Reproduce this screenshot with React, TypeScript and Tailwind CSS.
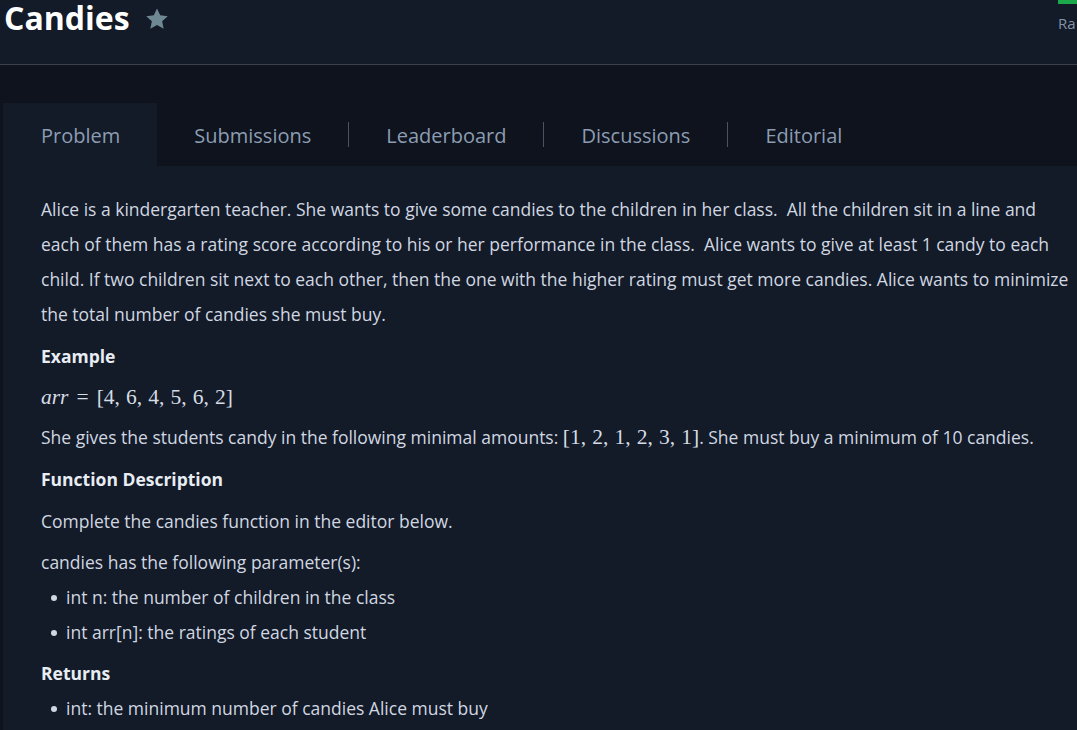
import type { FC } from 'react';

const tabs = ['Problem', 'Submissions', 'Leaderboard', 'Discussions', 'Editorial'];

const Math: FC<{ children: React.ReactNode }> = ({ children }) => (
  <span className="font-['Liberation_Serif','DejaVu_Serif',serif] text-[21.5px] text-[#d6dce4]">{children}</span>
);

const Header: FC = () => (
  <div className="relative h-[65px] border-b border-[#3b414c] bg-[#131a28]">
    <div className="flex items-center gap-[14px] pl-[4px] pt-[1px]">
      <h1 className="text-[32px] font-bold leading-[34px] text-white">Candies</h1>
      <svg viewBox="0 0 24 24" className="mt-[1px] h-[26px] w-[26px]" fill="#6f8994">
        <path d="M12 2.2l2.95 6.35 6.95.8-5.15 4.75 1.4 6.9L12 17.55 5.85 21l1.4-6.9L2.1 9.35l6.95-.8z" />
      </svg>
    </div>
    <div className="absolute right-0 top-0 w-[19px]">
      <div className="h-[4px] bg-[#1ba94c]" />
      <div className="mt-[11px] text-[15px] leading-[16px] text-[#8393a7]">Ra</div>
    </div>
  </div>
);

const Tabs: FC = () => (
  <div className="flex h-[63px] items-center bg-[#0e131d]">
    {tabs.map((tab, i) => (
      <div key={tab} className="flex h-full items-center">
        {i > 1 && <span className="h-[25px] w-px bg-[#4b5261]" />}
        <div
          className={
            'flex h-full items-center pt-[2px] text-[20px] text-[#8c9db3] ' +
            (i === 0 ? 'bg-[#131a28] pl-[38px] pr-[37px]' : 'px-[37px]')
          }
        >
          {tab}
        </div>
      </div>
    ))}
  </div>
);

const Bullet: FC<{ children: React.ReactNode }> = ({ children }) => (
  <li className="flex items-center leading-[35px]">
    <span className="mr-[9px] ml-[10px] h-[6px] w-[6px] rounded-full bg-[#d0d7e0]" />
    <span>{children}</span>
  </li>
);

const comma = ',\u2009\u200a';

export default function App() {
  return (
    <div className="h-[730px] w-full overflow-hidden bg-[#0e131d] font-['Open_Sans',sans-serif]">
      <Header />
      <div className="pl-[3px] pt-[38px]">
        <Tabs />
        <div className="whitespace-nowrap bg-[#131a28] px-[38px] pt-[26px] pb-10 text-[17.5px] text-[#d0d7e0]">
          <p className="mb-[7px] leading-[35px]">
            Alice is a kindergarten teacher. She wants to give some candies to the children in her class.{'\u00a0'} All
            the children sit in a line and
            <br />
            each of them has a rating score according to his or her performance in the class.{'\u00a0'} Alice wants to
            give at least 1 candy to each
            <br />
            child. If two children sit next to each other, then the one with the higher rating must get more candies.
            Alice wants to minimize
            <br />
            the total number of candies she must buy.
          </p>
          <h3 className="mb-[7px] font-bold leading-[35px] text-[#e8edf3]">Example</h3>
          <div className="mb-[6px] leading-[33px]">
            <Math>
              <i>arr</i>
              <span className="mx-[8px]">=</span>[4{comma}6{comma}4{comma}5{comma}6{comma}2]
            </Math>
          </div>
          <p className="mb-[7px] leading-[35px]">
            She gives the students candy in the following minimal amounts:{' '}
            <Math>
              [1{comma}2{comma}1{comma}2{comma}3{comma}1]
            </Math>
            . She must buy a minimum of 10 candies.
          </p>
          <h3 className="mb-[7px] font-bold leading-[35px] text-[#e8edf3]">Function Description</h3>
          <p className="mb-[6px] leading-[35px]">Complete the candies function in the editor below.</p>
          <p className="mb-0 leading-[35px]">candies has the following parameter(s):</p>
          <ul className="mb-[6px]">
            <Bullet>int n: the number of children in the class</Bullet>
            <Bullet>int arr[n]: the ratings of each student</Bullet>
          </ul>
          <h3 className="mb-0 font-bold leading-[35px] text-[#e8edf3]">Returns</h3>
          <ul>
            <Bullet>int: the minimum number of candies Alice must buy</Bullet>
          </ul>
        </div>
      </div>
    </div>
  );
}
